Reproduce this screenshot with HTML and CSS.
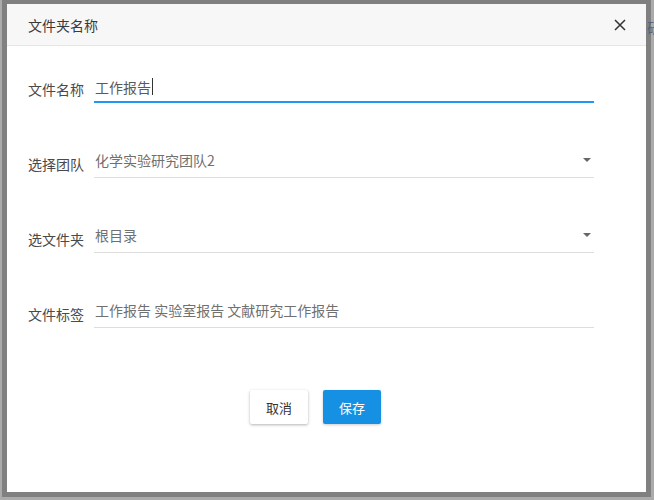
FILE: index.html
```html
<!DOCTYPE html>
<html lang="zh-CN">
<head>
  <meta charset="UTF-8" />
  <meta name="viewport" content="width=device-width, initial-scale=1.0"/>
  <title>文件夹名称</title>
  <link rel="stylesheet" href="styles.css">
</head>
<body>

<div class="overlay">
  <span class="behind-text">研</span>

  <div class="dialog">
    <div class="dialog-header">
      <span class="dialog-title">文件夹名称</span>
      <span class="close-btn">
        <svg width="12" height="12" viewBox="0 0 12 12">
          <path d="M1 1 L11 11 M11 1 L1 11" stroke="#333" stroke-width="1.5" fill="none"/>
        </svg>
      </span>
    </div>

    <div class="dialog-body">
      <div class="form-row">
        <label class="form-label">文件名称</label>
        <div class="field field-active">工作报告<span class="caret"></span></div>
      </div>

      <div class="form-row">
        <label class="form-label">选择团队</label>
        <div class="field field-select">化学实验研究团队2<span class="arrow"></span></div>
      </div>

      <div class="form-row">
        <label class="form-label">选文件夹</label>
        <div class="field field-select">根目录<span class="arrow"></span></div>
      </div>

      <div class="form-row">
        <label class="form-label">文件标签</label>
        <div class="field">工作报告 实验室报告 文献研究工作报告</div>
      </div>

      <div class="actions">
        <button class="btn btn-cancel">取消</button>
        <button class="btn btn-primary">保存</button>
      </div>
    </div>
  </div>
</div>

</body>
</html>
```

FILE: styles.css
```css
* { box-sizing: border-box; }

body {
  margin: 0;
  width: 654px;
  height: 500px;
  overflow: hidden;
  background: #ababab;
  font-family: "Noto Sans CJK SC", "Noto Sans", sans-serif;
}

.overlay {
  position: relative;
  margin-left: 2px;
  width: 649px;
  height: 497px;
  padding: 4px 5px 5px 5px;
  background: #808080;
}

.behind-text {
  position: absolute;
  left: 645px;
  top: 19px;
  font-size: 14px;
  line-height: 16px;
  color: #4d6480;
}

.dialog {
  position: relative;
  height: 488px;
  background: #fff;
}

.dialog-header {
  height: 42px;
  display: flex;
  align-items: center;
  justify-content: space-between;
  padding: 0 20px 0 21px;
  background: #f7f7f7;
  border-bottom: 1px solid #e6e6e6;
}

.dialog-title {
  font-size: 14px;
  color: #3a3a3a;
}

.close-btn {
  display: flex;
  margin-top: 1px;
}

.dialog-body {
  padding: 25px 0 0 21px;
}

.form-row {
  display: flex;
  align-items: flex-end;
  margin-bottom: 43px;
}

.form-label {
  width: 66px;
  font-size: 14px;
  line-height: 20px;
  padding-bottom: 4px;
  color: #4a4a4a;
}

.field {
  position: relative;
  width: 500px;
  height: 32px;
  padding: 0 0 7px 1px;
  display: flex;
  align-items: flex-end;
  font-size: 14px;
  line-height: 20px;
  color: #707070;
  border-bottom: 1px solid #ddd;
}

.field-active {
  color: #5a5a5a;
  padding-bottom: 4px;
  border-bottom: 2px solid #2196f3;
}

.caret {
  display: inline-block;
  width: 1px;
  height: 17px;
  margin: 0 0 2px 1px;
  background: #333;
}

.arrow {
  position: absolute;
  right: 3px;
  top: 12px;
  width: 0;
  height: 0;
  border-left: 4px solid transparent;
  border-right: 4px solid transparent;
  border-top: 4px solid #666;
}

.actions {
  display: flex;
  justify-content: center;
  gap: 15px;
  padding-top: 19px;
  padding-right: 43px;
}

.btn {
  width: 58px;
  height: 34px;
  border: none;
  border-radius: 2px;
  font-family: inherit;
  font-size: 13px;
  cursor: pointer;
}

.btn-cancel {
  background: #fff;
  color: #333;
  box-shadow: 0 1px 3px rgba(0,0,0,0.3);
}

.btn-primary {
  background: #1690e3;
  color: #fff;
  box-shadow: 0 1px 3px rgba(0,0,0,0.2);
}
```
